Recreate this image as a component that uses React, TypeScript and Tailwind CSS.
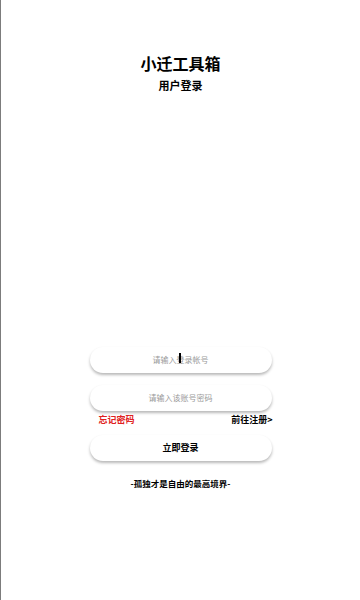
import { useState } from "react";

export default function App() {
	const [account, setAccount] = useState("");
	const [password, setPassword] = useState("");

	return (
		<div className="min-h-[600px] w-full border-l border-[#7c7c7c] bg-white font-['Noto_Sans_CJK_SC','Noto_Sans',sans-serif] text-black">
			{/* Header */}
			<div className="flex flex-col items-center pt-[53px]">
				<h1 className="text-[16px] leading-[20px] font-bold">小迁工具箱</h1>
				<p className="mt-[5px] text-[11px] leading-[14px] font-bold">用户登录</p>
			</div>

			{/* Form */}
			<div className="mx-auto mt-[252px] flex w-[182px] flex-col">
				<div className="relative">
					<input
						value={account}
						onChange={(e) => setAccount(e.target.value)}
						placeholder="请输入登录帐号"
						className="h-[26px] w-full rounded-full bg-white text-center text-[8px] outline-none shadow-[0_2px_3px_rgba(0,0,0,0.28)] placeholder:text-[#9a9a9a]"
					/>
					{account === "" && (
						<span className="pointer-events-none absolute top-[9px] left-[89px] h-[10px] w-[2px] bg-black" />
					)}
				</div>
				<input
					type="password"
					value={password}
					onChange={(e) => setPassword(e.target.value)}
					placeholder="请输入该账号密码"
					className="mt-[12px] h-[26px] w-full rounded-full bg-white text-center text-[8px] outline-none shadow-[0_2px_3px_rgba(0,0,0,0.28)] placeholder:text-[#9a9a9a]"
				/>
				<div className="mt-[3px] flex items-center justify-between pl-[9px] text-[9px] leading-[12px] font-bold">
					<span className="text-[#e02020]">忘记密码</span>
					<span className="mr-[-1px]">前往注册&gt;</span>
				</div>
				<button className="mt-[9px] h-[26px] w-full rounded-full bg-white text-[9px] font-bold shadow-[0_2px_3px_rgba(0,0,0,0.28)]">
					立即登录
				</button>
				<p className="mt-[16px] text-center text-[8.5px] leading-[12px] font-bold">
					-孤独才是自由的最高境界-
				</p>
			</div>
		</div>
	);
}
